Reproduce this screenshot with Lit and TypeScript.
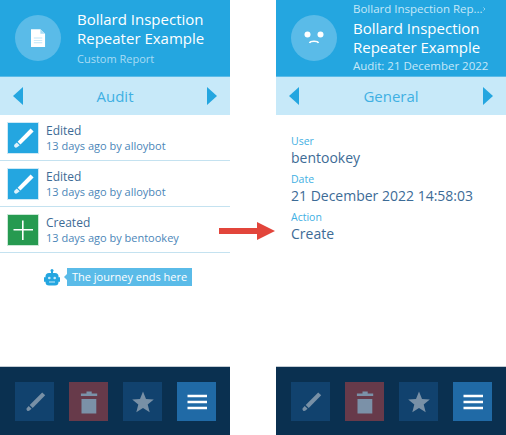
import { LitElement, html, css, svg } from "lit";
import { customElement } from "lit/decorators.js";

const pencil = (fill: string) => html`<svg viewBox="0 0 30 30" width="30" height="30"><path fill=${fill} d="M22.6 5.6l3 2.9L12.5 21.6l-2.9-2.9z"/><path fill=${fill} opacity=".85" d="M8.8 19.4l2.9 2.9-2.6 2c-.8.6-1.9.5-2.5-.2s-.7-1.7-.1-2.5z"/></svg>`;
const plus = html`<svg viewBox="0 0 30 30" width="30" height="30"><path fill="#fff" d="M14 5.5h1.6V14H25v1.6h-9.4V25H14v-9.4H5.5V14H14z"/></svg>`;
const chevL = html`<svg class="chev" viewBox="0 0 10 18" width="10" height="18"><path fill="#24a6e0" d="M10 0v18L0 9z"/></svg>`;
const chevR = html`<svg class="chev" viewBox="0 0 10 18" width="10" height="18"><path fill="#24a6e0" d="M0 0v18L10 9z"/></svg>`;

@customElement("app-root")
export class AppRoot extends LitElement {
  static styles = css`
    :host { display: block; width: 506px; height: 435px; background: #fff; font-family: "Open Sans", sans-serif; position: relative; overflow: hidden; }
    .page { display: grid; grid-template-columns: 230px 230px; column-gap: 46px; height: 435px; }
    .phone { display: flex; flex-direction: column; height: 435px; }
    .head { height: 76px; box-sizing: border-box; background: #24a6e0; display: flex; align-items: center; padding-left: 15px; gap: 16px; color: #fff; }
    .circle { width: 46px; height: 46px; border-radius: 50%; background: #5abbe8; flex: none; display: flex; align-items: center; justify-content: center; }
    .titles { display: flex; flex-direction: column; min-width: 0; }
    .crumb { font-size: 11.5px; line-height: 16px; color: #c6e8f8; display: flex; justify-content: space-between; width: 132px; white-space: nowrap; margin-top: -2px; margin-bottom: 2px; }
    .title { font-size: 15px; line-height: 19px; white-space: nowrap; }
    .sub { font-size: 11px; line-height: 16px; color: #a9dcf4; margin-top: 3px; white-space: nowrap; }
    .sub.alt { font-size: 11.5px; color: #c6e8f8; margin-top: 1px; }
    .tabs { height: 39px; box-sizing: border-box; border-top: 1px solid #5abbe8; background: #c7e9f9; display: flex; align-items: center; justify-content: space-between; padding: 0 13px; color: #3fb0e3; font-size: 15px; }
    .list { flex: 1; display: flex; flex-direction: column; }
    .row { height: 46px; box-sizing: border-box; border-bottom: 1px solid #c4e2f0; display: flex; align-items: center; padding-left: 8px; gap: 8px; }
    .ic { width: 30px; height: 30px; background: #24a6e0; flex: none; outline: 1px solid #cde9f6; }
    .ic.green { background: #269a50; outline-color: #c9e8d6; }
    .ic svg { display: block; }
    .rt { display: flex; flex-direction: column; }
    .r1 { font-size: 12px; line-height: 15px; color: #3d6b96; }
    .r2 { font-size: 11px; line-height: 15px; color: #4b86b8; white-space: nowrap; }
    .end { display: flex; align-items: center; padding: 15px 0 0 44px; }
    .bubble { position: relative; margin-left: 7px; background: #5abbe8; color: #fff; font-size: 11px; line-height: 18px; padding: 0 5px; white-space: nowrap; }
    .bubble::before { content: ""; position: absolute; left: -3px; top: 6px; border-style: solid; border-width: 3px 3px 3px 0; border-color: transparent #5abbe8 transparent transparent; }
    .detail { flex: 1; padding: 20px 0 0 15px; display: flex; flex-direction: column; }
    .lab { font-size: 10.5px; line-height: 13px; color: #3fb0e3; }
    .val { font-size: 14px; line-height: 19px; color: #3d6b96; margin-bottom: 6px; white-space: nowrap; }
    .foot { height: 69px; box-sizing: border-box; border-top: 1px solid #c3ccd4; background: #0a3050; display: flex; gap: 15px; padding: 15px 0 0 15px; }
    .btn { width: 39px; height: 39px; background: #11426e; display: flex; align-items: center; justify-content: center; }
    .btn svg { display: block; }
    .btn.red { background: #673a4a; }
    .btn.on { background: #206aa6; }
    .arrow { position: absolute; left: 219px; top: 222px; display: block; }
  `;

  foot() {
    return html`<div class="foot">
      <div class="btn"><svg viewBox="0 0 24 24" width="24" height="24"><path fill="#7890a6" d="M19.2 2.6l3 2.7L9.7 17.9l-3-2.8z"/><path fill="#7890a6" d="M5.7 16l2.9 2.8-2.1 1.8c-.8.6-1.8.6-2.5-.1s-.7-1.6-.1-2.4z"/></svg></div>
      <div class="btn red"><svg viewBox="0 0 24 24" width="24" height="24"><path fill="#7b91a8" d="M4.5 9h14.800v14.500H4.500zM3.900 3.500h5.600V1.500h5.200v2h5.500v2.500H3.900z"/></svg></div>
      <div class="btn"><svg viewBox="0 0 24 24" width="24" height="24"><path fill="#7890a6" d="M12 1.500l3 7.500 7.800.4-6.100 5 2 7.800L12 17.900l-6.700 4.300 2-7.800-6.100-5L9 9z"/></svg></div>
      <div class="btn on"><svg viewBox="0 0 24 24" width="24" height="24"><path fill="#fff" d="M2.500 4.800h19.500v2.400H2.500zM2.500 10.800h19.500v2.400H2.500zM2.500 16.800h19.500v2.400H2.500z"/></svg></div>
    </div>`;
  }

  row(icon: unknown, a: string, b: string, green = false) {
    return html`<div class="row"><div class="ic ${green ? "green" : ""}">${icon}</div><div class="rt"><div class="r1">${a}</div><div class="r2">${b}</div></div></div>`;
  }

  render() {
    return html`<div class="page">
      <section class="phone">
        <div class="head">
          <div class="circle"><svg viewBox="0 0 16 20" width="15" height="19"><path fill="#fff" d="M0 0h10l5 5v14H0z"/><path fill="#a9dcf4" d="M10 0l5 5h-5z"/><path fill="#bfe5f7" d="M3 9h9v1H3zM3 11.500h9v1H3zM3 14h9v1H3z"/></svg></div>
          <div class="titles"><div class="title">Bollard Inspection</div><div class="title">Repeater Example</div><div class="sub">Custom Report</div></div>
        </div>
        <div class="tabs">${chevL}<span>Audit</span>${chevR}</div>
        <div class="list">
          ${this.row(pencil("#fff"), "Edited", "13 days ago by alloybot")}
          ${this.row(pencil("#fff"), "Edited", "13 days ago by alloybot")}
          ${this.row(plus, "Created", "13 days ago by bentookey", true)}
          <div class="end">
            <svg viewBox="0 0 16 17" width="16" height="17"><circle cx="8" cy="1.500" r="1.500" fill="#24a6e0"/><rect x="7" y="2" width="2" height="3" fill="#24a6e0"/><rect x="1.500" y="4" width="13" height="12.500" rx="3.500" fill="#24a6e0"/><rect x="0" y="8" width="2" height="5" rx="1" fill="#24a6e0"/><rect x="14" y="8" width="2" height="5" rx="1" fill="#24a6e0"/><circle cx="5.300" cy="9" r="1.300" fill="#c7e9f9"/><circle cx="10.700" cy="9" r="1.300" fill="#c7e9f9"/><rect x="5" y="12.500" width="6" height="1" fill="#c7e9f9"/></svg>
            <div class="bubble">The journey ends here</div>
          </div>
        </div>
        ${this.foot()}
      </section>
      <section class="phone">
        <div class="head">
          <div class="circle"><svg viewBox="0 0 20 14" width="20" height="14"><circle cx="3.500" cy="3.500" r="3" fill="#fff"/><circle cx="16.500" cy="3.500" r="3" fill="#fff"/><path fill="none" stroke="#fff" stroke-width="1.500" d="M5.500 12c1-2.500 8-2.500 9 0"/></svg></div>
          <div class="titles"><div class="crumb"><span>Bollard Inspection Rep...</span><svg viewBox="0 0 6 10" width="6" height="10" style="margin-top:3px"><path fill="none" stroke="#e3f4fc" stroke-width="1.500" d="M1 1l4 4-4 4"/></svg></div><div class="title">Bollard Inspection</div><div class="title">Repeater Example</div><div class="sub alt">Audit: 21 December 2022</div></div>
        </div>
        <div class="tabs">${chevL}<span>General</span>${chevR}</div>
        <div class="detail">
          <div class="lab">User</div><div class="val">bentookey</div>
          <div class="lab">Date</div><div class="val">21 December 2022 14:58:03</div>
          <div class="lab">Action</div><div class="val">Create</div>
        </div>
        ${this.foot()}
      </section>
    </div>
    <svg class="arrow" viewBox="0 0 57 18" width="57" height="18"><path fill="#e2453b" d="M0 6h38V0l18 9-18 9v-6H0z"/></svg>`;
  }
}
void svg;
